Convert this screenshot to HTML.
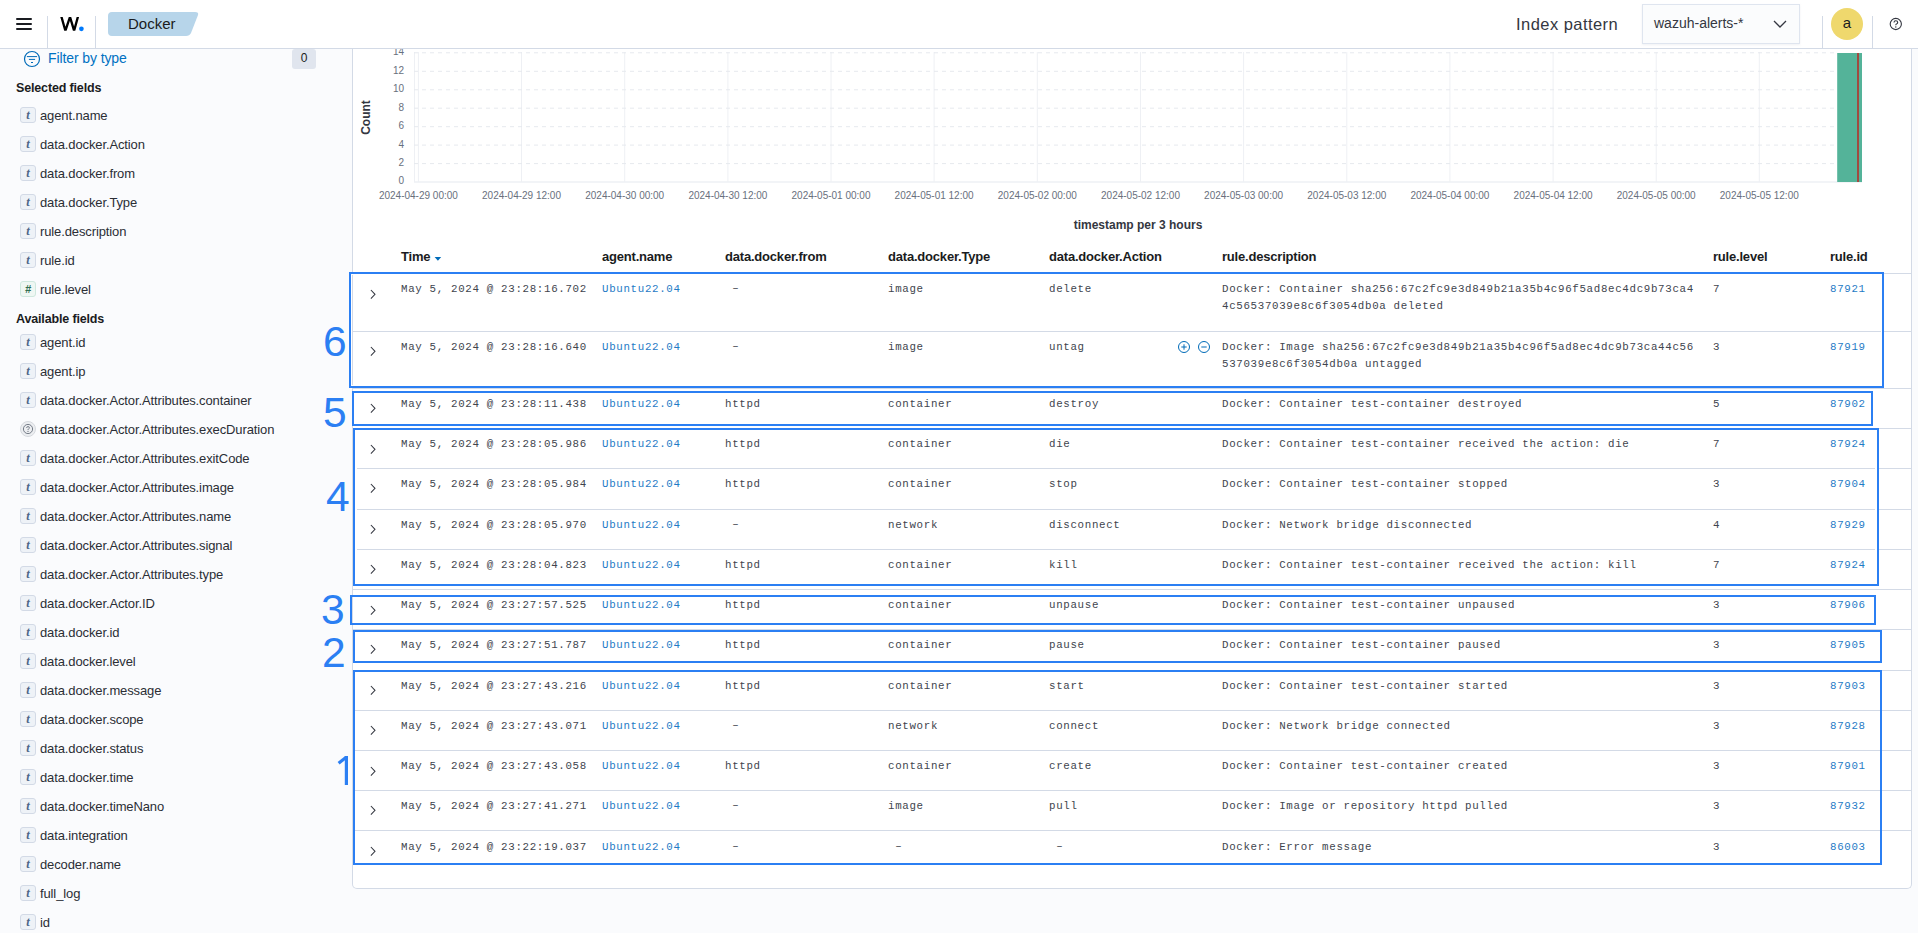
<!DOCTYPE html>
<html><head><meta charset="utf-8"><title>Docker - Wazuh</title>
<style>
*{box-sizing:border-box;margin:0;padding:0}
html,body{width:1918px;height:933px;overflow:hidden;background:#fafbfd;font-family:"Liberation Sans", sans-serif;color:#343741}
.abs{position:absolute}
.hdr{position:absolute;left:0;top:0;width:1918px;height:49px;background:#fff;border-bottom:1px solid #d3dae6}
.sep{position:absolute;width:1px;background:#d3dae6}
.fld{position:absolute;left:20px;height:16px;white-space:nowrap}
.fico{position:absolute;left:0;top:0;width:16px;height:16px;border:1px solid #d3dae6;background:#eef2f7;border-radius:3px;font-family:"Liberation Serif", serif;font-style:italic;font-weight:700;font-size:12.5px;line-height:14px;text-align:center;color:#4d6688}
.fname{position:absolute;left:20px;top:0px;font-size:13px;letter-spacing:-0.12px;line-height:18px;color:#2b2e35}
.sect{position:absolute;left:16px;font-size:12.5px;font-weight:700;letter-spacing:-0.15px;color:#1a1c21;white-space:nowrap}
.panel{position:absolute;left:352px;top:49px;width:1560px;height:840px;background:#fff;border:1px solid #d3dae6;border-top:none;border-radius:0 0 5px 5px}
.th{position:absolute;top:248px;font-size:13px;font-weight:700;color:#1a1c21;white-space:nowrap;letter-spacing:-0.2px;line-height:18px}
.row{position:absolute;left:353px;width:1558px;border-bottom:1px solid #d3dae6}
.cell{position:absolute;font-family:"Liberation Mono", monospace;font-size:10.8px;letter-spacing:0.67px;line-height:16.7px;color:#41454e;white-space:pre}
.lnk{color:#1f7bc6}
.chev{position:absolute;left:370px;width:7px;height:11px}
.box{position:absolute;border:2px solid #2b7ff3}
.num{position:absolute;font-size:42.5px;line-height:44px;color:#2b7ff3;font-family:"Liberation Sans", sans-serif}
</style></head><body>

<div class="hdr"></div>
<div class="abs" style="left:16px;top:18px;width:16px;height:2px;background:#1a1c21;border-radius:1px"></div>
<div class="abs" style="left:16px;top:23px;width:16px;height:2px;background:#1a1c21;border-radius:1px"></div>
<div class="abs" style="left:16px;top:28px;width:16px;height:2px;background:#1a1c21;border-radius:1px"></div>
<div class="sep" style="left:47px;top:16px;height:32px"></div>
<svg class="abs" style="left:56px;top:14px" width="32" height="20"><defs><clipPath id="wc"><rect x="0" y="3" width="24" height="13.8"/></clipPath></defs><polyline clip-path="url(#wc)" points="4.93,1 9.4,16.7 14,3 18.1,16.7 22.4,1" fill="none" stroke="#000" stroke-width="2.35" stroke-linejoin="miter" stroke-miterlimit="10"/><circle cx="25.4" cy="14.8" r="2.35" fill="#0079fb"/></svg>
<div class="sep" style="left:95px;top:16px;height:32px"></div>
<svg class="abs" style="left:0;top:0" width="220" height="48"><path d="M112 12 H195 Q199 12 198 15 L191 33 Q189.5 36 186 36 H112 Q108 36 108 32 V16 Q108 12 112 12 Z" fill="#b7d5ea"/></svg>
<div class="abs" style="left:128px;top:15px;font-size:15px;line-height:18px;color:#1a1c21">Docker</div>
<div class="abs" style="left:1516px;top:12.5px;font-size:16.5px;letter-spacing:0.45px;line-height:22px;color:#343741;white-space:nowrap">Index pattern</div>
<div class="abs" style="left:1642px;top:4px;width:158px;height:40px;background:#fbfcfd;border:1px solid #dfe5ef;box-shadow:0 1px 2px rgba(152,162,179,0.15)"></div>
<div class="abs" style="left:1654px;top:15px;font-size:14px;line-height:17px;color:#343741;white-space:nowrap">wazuh-alerts-*</div>
<svg class="abs" style="left:1772px;top:18px" width="16" height="12"><path d="M2 3 L8 9 L14 3" fill="none" stroke="#343741" stroke-width="1.3"/></svg>
<div class="sep" style="left:1822px;top:16px;height:32px"></div>
<div class="abs" style="left:1831px;top:8px;width:32px;height:32px;border-radius:50%;background:#efd86d;text-align:center;font-size:15px;line-height:29px;color:#1a1c21">a</div>
<div class="sep" style="left:1872px;top:16px;height:32px"></div>
<svg class="abs" style="left:1888px;top:16px" width="16" height="16"><circle cx="7.8" cy="8" r="5.6" fill="none" stroke="#343741" stroke-width="1.1"/><path d="M6 6.6 Q6 4.8 7.8 4.8 Q9.7 4.8 9.7 6.5 Q9.7 7.6 8.4 8.1 Q7.8 8.4 7.8 9.3" fill="none" stroke="#343741" stroke-width="1.1"/><circle cx="7.8" cy="11" r="0.7" fill="#343741"/></svg>
<svg class="abs" style="left:23px;top:50px" width="18" height="18"><circle cx="9" cy="9" r="7.5" fill="none" stroke="#006bb8" stroke-width="1.2"/><path d="M3.9 6.6 H14.1 M5.9 9.4 H12.1 M8 12.5 H10" stroke="#006bb8" stroke-width="1"/></svg>
<div class="abs" style="left:48px;top:49px;font-size:14px;letter-spacing:-0.1px;line-height:18px;color:#0071c2;white-space:nowrap">Filter by type</div>
<div class="abs" style="left:292px;top:49px;width:24px;height:20px;background:#e0e5ee;border-radius:3px;font-size:12px;line-height:19px;text-align:center;color:#1a1c21">0</div>
<div class="sect" style="top:80px;line-height:16px">Selected fields</div>
<div class="fld" style="top:107px"><div class="fico">t</div><div class="fname">agent.name</div></div>
<div class="fld" style="top:136px"><div class="fico">t</div><div class="fname">data.docker.Action</div></div>
<div class="fld" style="top:165px"><div class="fico">t</div><div class="fname">data.docker.from</div></div>
<div class="fld" style="top:194px"><div class="fico">t</div><div class="fname">data.docker.Type</div></div>
<div class="fld" style="top:223px"><div class="fico">t</div><div class="fname">rule.description</div></div>
<div class="fld" style="top:252px"><div class="fico">t</div><div class="fname">rule.id</div></div>
<div class="fld" style="top:281px"><div class="fico" style="border-color:#cfe8de;background:#eff7f3;color:#2f6e52;font-family:'Liberation Sans', sans-serif;font-style:italic;font-weight:700;font-size:11px">#</div><div class="fname">rule.level</div></div>
<div class="sect" style="top:311px;line-height:16px">Available fields</div>
<div class="fld" style="top:334px"><div class="fico">t</div><div class="fname">agent.id</div></div>
<div class="fld" style="top:363px"><div class="fico">t</div><div class="fname">agent.ip</div></div>
<div class="fld" style="top:392px"><div class="fico">t</div><div class="fname">data.docker.Actor.Attributes.container</div></div>
<div class="fld" style="top:421px"><svg class="abs" style="left:0;top:0" width="16" height="16"><circle cx="8" cy="8" r="7.5" fill="#eceef1" stroke="#d6d9de" stroke-width="1"/><circle cx="8" cy="8" r="4.6" fill="none" stroke="#69707d" stroke-width="0.9"/><path d="M6.6 6.9 Q6.6 5.6 8 5.6 Q9.4 5.6 9.4 6.8 Q9.4 7.6 8.5 8 Q8 8.3 8 9" fill="none" stroke="#69707d" stroke-width="0.9"/><circle cx="8" cy="10.4" r="0.55" fill="#69707d"/></svg><div class="fname">data.docker.Actor.Attributes.execDuration</div></div>
<div class="fld" style="top:450px"><div class="fico">t</div><div class="fname">data.docker.Actor.Attributes.exitCode</div></div>
<div class="fld" style="top:479px"><div class="fico">t</div><div class="fname">data.docker.Actor.Attributes.image</div></div>
<div class="fld" style="top:508px"><div class="fico">t</div><div class="fname">data.docker.Actor.Attributes.name</div></div>
<div class="fld" style="top:537px"><div class="fico">t</div><div class="fname">data.docker.Actor.Attributes.signal</div></div>
<div class="fld" style="top:566px"><div class="fico">t</div><div class="fname">data.docker.Actor.Attributes.type</div></div>
<div class="fld" style="top:595px"><div class="fico">t</div><div class="fname">data.docker.Actor.ID</div></div>
<div class="fld" style="top:624px"><div class="fico">t</div><div class="fname">data.docker.id</div></div>
<div class="fld" style="top:653px"><div class="fico">t</div><div class="fname">data.docker.level</div></div>
<div class="fld" style="top:682px"><div class="fico">t</div><div class="fname">data.docker.message</div></div>
<div class="fld" style="top:711px"><div class="fico">t</div><div class="fname">data.docker.scope</div></div>
<div class="fld" style="top:740px"><div class="fico">t</div><div class="fname">data.docker.status</div></div>
<div class="fld" style="top:769px"><div class="fico">t</div><div class="fname">data.docker.time</div></div>
<div class="fld" style="top:798px"><div class="fico">t</div><div class="fname">data.docker.timeNano</div></div>
<div class="fld" style="top:827px"><div class="fico">t</div><div class="fname">data.integration</div></div>
<div class="fld" style="top:856px"><div class="fico">t</div><div class="fname">decoder.name</div></div>
<div class="fld" style="top:885px"><div class="fico">t</div><div class="fname">full_log</div></div>
<div class="fld" style="top:914px"><div class="fico">t</div><div class="fname">id</div></div>
<div class="panel"></div>
<svg class="abs" style="left:0;top:49px" width="1918" height="191"><g transform="translate(0,-49)"><line x1="418.4" y1="52" x2="418.4" y2="182" stroke="#eef0f4" stroke-width="1"/><line x1="521.5" y1="52" x2="521.5" y2="182" stroke="#eef0f4" stroke-width="1"/><line x1="624.7" y1="52" x2="624.7" y2="182" stroke="#eef0f4" stroke-width="1"/><line x1="727.9" y1="52" x2="727.9" y2="182" stroke="#eef0f4" stroke-width="1"/><line x1="831.0" y1="52" x2="831.0" y2="182" stroke="#eef0f4" stroke-width="1"/><line x1="934.1" y1="52" x2="934.1" y2="182" stroke="#eef0f4" stroke-width="1"/><line x1="1037.3" y1="52" x2="1037.3" y2="182" stroke="#eef0f4" stroke-width="1"/><line x1="1140.5" y1="52" x2="1140.5" y2="182" stroke="#eef0f4" stroke-width="1"/><line x1="1243.6" y1="52" x2="1243.6" y2="182" stroke="#eef0f4" stroke-width="1"/><line x1="1346.8" y1="52" x2="1346.8" y2="182" stroke="#eef0f4" stroke-width="1"/><line x1="1449.9" y1="52" x2="1449.9" y2="182" stroke="#eef0f4" stroke-width="1"/><line x1="1553.1" y1="52" x2="1553.1" y2="182" stroke="#eef0f4" stroke-width="1"/><line x1="1656.2" y1="52" x2="1656.2" y2="182" stroke="#eef0f4" stroke-width="1"/><line x1="1759.3" y1="52" x2="1759.3" y2="182" stroke="#eef0f4" stroke-width="1"/><line x1="414.5" y1="52" x2="414.5" y2="182" stroke="#eef0f4" stroke-width="1"/><line x1="414" y1="163.6" x2="1835" y2="163.6" stroke="#e6e9ee" stroke-width="1" stroke-dasharray="4 4"/><line x1="414" y1="145.1" x2="1835" y2="145.1" stroke="#e6e9ee" stroke-width="1" stroke-dasharray="4 4"/><line x1="414" y1="126.7" x2="1835" y2="126.7" stroke="#e6e9ee" stroke-width="1" stroke-dasharray="4 4"/><line x1="414" y1="108.2" x2="1835" y2="108.2" stroke="#e6e9ee" stroke-width="1" stroke-dasharray="4 4"/><line x1="414" y1="89.8" x2="1835" y2="89.8" stroke="#e6e9ee" stroke-width="1" stroke-dasharray="4 4"/><line x1="414" y1="71.3" x2="1835" y2="71.3" stroke="#e6e9ee" stroke-width="1" stroke-dasharray="4 4"/><line x1="414" y1="52.8" x2="1835" y2="52.8" stroke="#e6e9ee" stroke-width="1" stroke-dasharray="4 4"/><line x1="414" y1="182" x2="1862" y2="182" stroke="#eef0f4" stroke-width="1.5"/><text x="404" y="184.4" text-anchor="end" font-family="Liberation Sans" font-size="10" fill="#69707d">0</text><text x="404" y="166.0" text-anchor="end" font-family="Liberation Sans" font-size="10" fill="#69707d">2</text><text x="404" y="147.5" text-anchor="end" font-family="Liberation Sans" font-size="10" fill="#69707d">4</text><text x="404" y="129.1" text-anchor="end" font-family="Liberation Sans" font-size="10" fill="#69707d">6</text><text x="404" y="110.6" text-anchor="end" font-family="Liberation Sans" font-size="10" fill="#69707d">8</text><text x="404" y="92.2" text-anchor="end" font-family="Liberation Sans" font-size="10" fill="#69707d">10</text><text x="404" y="73.7" text-anchor="end" font-family="Liberation Sans" font-size="10" fill="#69707d">12</text><text x="404" y="55.2" text-anchor="end" font-family="Liberation Sans" font-size="10" fill="#69707d">14</text><text x="418.4" y="198.6" text-anchor="middle" font-family="Liberation Sans" font-size="10" fill="#69707d">2024-04-29 00:00</text><text x="521.5" y="198.6" text-anchor="middle" font-family="Liberation Sans" font-size="10" fill="#69707d">2024-04-29 12:00</text><text x="624.7" y="198.6" text-anchor="middle" font-family="Liberation Sans" font-size="10" fill="#69707d">2024-04-30 00:00</text><text x="727.9" y="198.6" text-anchor="middle" font-family="Liberation Sans" font-size="10" fill="#69707d">2024-04-30 12:00</text><text x="831.0" y="198.6" text-anchor="middle" font-family="Liberation Sans" font-size="10" fill="#69707d">2024-05-01 00:00</text><text x="934.1" y="198.6" text-anchor="middle" font-family="Liberation Sans" font-size="10" fill="#69707d">2024-05-01 12:00</text><text x="1037.3" y="198.6" text-anchor="middle" font-family="Liberation Sans" font-size="10" fill="#69707d">2024-05-02 00:00</text><text x="1140.5" y="198.6" text-anchor="middle" font-family="Liberation Sans" font-size="10" fill="#69707d">2024-05-02 12:00</text><text x="1243.6" y="198.6" text-anchor="middle" font-family="Liberation Sans" font-size="10" fill="#69707d">2024-05-03 00:00</text><text x="1346.8" y="198.6" text-anchor="middle" font-family="Liberation Sans" font-size="10" fill="#69707d">2024-05-03 12:00</text><text x="1449.9" y="198.6" text-anchor="middle" font-family="Liberation Sans" font-size="10" fill="#69707d">2024-05-04 00:00</text><text x="1553.1" y="198.6" text-anchor="middle" font-family="Liberation Sans" font-size="10" fill="#69707d">2024-05-04 12:00</text><text x="1656.2" y="198.6" text-anchor="middle" font-family="Liberation Sans" font-size="10" fill="#69707d">2024-05-05 00:00</text><text x="1759.3" y="198.6" text-anchor="middle" font-family="Liberation Sans" font-size="10" fill="#69707d">2024-05-05 12:00</text><rect x="1837.2" y="53" width="24.8" height="129" fill="#54b399"/><rect x="1857" y="53" width="2" height="129" fill="#a04a3f"/><text transform="translate(370,117.5) rotate(-90)" text-anchor="middle" font-family="Liberation Sans" font-weight="700" font-size="12" fill="#343741">Count</text><text x="1138" y="229.2" text-anchor="middle" font-family="Liberation Sans" font-weight="700" font-size="12" fill="#343741">timestamp per 3 hours</text></g></svg>
<div class="th" style="left:401px">Time</div>
<svg class="abs" style="left:433px;top:256px" width="10" height="6"><path d="M1.6 1 H8.2 L4.9 4.7 Z" fill="#006bb8"/></svg>
<div class="th" style="left:602px">agent.name</div>
<div class="th" style="left:725px">data.docker.from</div>
<div class="th" style="left:888px">data.docker.Type</div>
<div class="th" style="left:1049px">data.docker.Action</div>
<div class="th" style="left:1222px">rule.description</div>
<div class="th" style="left:1713px">rule.level</div>
<div class="th" style="left:1830px">rule.id</div>
<div class="abs" style="left:357px;top:273px;width:1554px;height:1px;background:#d3dae6"></div>
<div class="abs" style="left:353px;top:331px;width:1558px;height:1px;background:#d3dae6"></div>
<div class="abs" style="left:353px;top:388px;width:1558px;height:1px;background:#d3dae6"></div>
<div class="abs" style="left:353px;top:428px;width:1558px;height:1px;background:#d3dae6"></div>
<div class="abs" style="left:353px;top:468px;width:1558px;height:1px;background:#d3dae6"></div>
<div class="abs" style="left:353px;top:509px;width:1558px;height:1px;background:#d3dae6"></div>
<div class="abs" style="left:353px;top:549px;width:1558px;height:1px;background:#d3dae6"></div>
<div class="abs" style="left:353px;top:589px;width:1558px;height:1px;background:#d3dae6"></div>
<div class="abs" style="left:353px;top:629px;width:1558px;height:1px;background:#d3dae6"></div>
<div class="abs" style="left:353px;top:670px;width:1558px;height:1px;background:#d3dae6"></div>
<div class="abs" style="left:353px;top:710px;width:1558px;height:1px;background:#d3dae6"></div>
<div class="abs" style="left:353px;top:750px;width:1558px;height:1px;background:#d3dae6"></div>
<div class="abs" style="left:353px;top:790px;width:1558px;height:1px;background:#d3dae6"></div>
<div class="abs" style="left:353px;top:830px;width:1558px;height:1px;background:#d3dae6"></div>
<svg class="chev" style="top:288.6px" width="7" height="11"><path d="M0.9 1 L5 5.3 L0.9 9.6" fill="none" stroke="#343741" stroke-width="1.05"/></svg>
<div class="cell" style="left:401px;top:281.4px">May 5, 2024 @ 23:28:16.702</div>
<div class="cell lnk" style="left:602px;top:281.4px">Ubuntu22.04</div>
<div class="cell" style="left:725px;top:281.4px"> <span style="position:relative;top:-1px">–</span></div>
<div class="cell" style="left:888px;top:281.4px">image</div>
<div class="cell" style="left:1049px;top:281.4px">delete</div>
<div class="cell" style="left:1222px;top:281.4px">Docker: Container sha256:67c2fc9e3d849b21a35b4c96f5ad8ec4dc9b73ca4
4c56537039e8c6f3054db0a deleted</div>
<div class="cell" style="left:1713px;top:281.4px">7</div>
<div class="cell lnk" style="left:1830px;top:281.4px">87921</div>
<svg class="chev" style="top:346.0px" width="7" height="11"><path d="M0.9 1 L5 5.3 L0.9 9.6" fill="none" stroke="#343741" stroke-width="1.05"/></svg>
<div class="cell" style="left:401px;top:338.8px">May 5, 2024 @ 23:28:16.640</div>
<div class="cell lnk" style="left:602px;top:338.8px">Ubuntu22.04</div>
<div class="cell" style="left:725px;top:338.8px"> <span style="position:relative;top:-1px">–</span></div>
<div class="cell" style="left:888px;top:338.8px">image</div>
<div class="cell" style="left:1049px;top:338.8px">untag</div>
<div class="cell" style="left:1222px;top:338.8px">Docker: Image sha256:67c2fc9e3d849b21a35b4c96f5ad8ec4dc9b73ca44c56
537039e8c6f3054db0a untagged</div>
<div class="cell" style="left:1713px;top:338.8px">3</div>
<div class="cell lnk" style="left:1830px;top:338.8px">87919</div>
<svg class="chev" style="top:403.4px" width="7" height="11"><path d="M0.9 1 L5 5.3 L0.9 9.6" fill="none" stroke="#343741" stroke-width="1.05"/></svg>
<div class="cell" style="left:401px;top:396.2px">May 5, 2024 @ 23:28:11.438</div>
<div class="cell lnk" style="left:602px;top:396.2px">Ubuntu22.04</div>
<div class="cell" style="left:725px;top:396.2px">httpd</div>
<div class="cell" style="left:888px;top:396.2px">container</div>
<div class="cell" style="left:1049px;top:396.2px">destroy</div>
<div class="cell" style="left:1222px;top:396.2px">Docker: Container test-container destroyed</div>
<div class="cell" style="left:1713px;top:396.2px">5</div>
<div class="cell lnk" style="left:1830px;top:396.2px">87902</div>
<svg class="chev" style="top:443.7px" width="7" height="11"><path d="M0.9 1 L5 5.3 L0.9 9.6" fill="none" stroke="#343741" stroke-width="1.05"/></svg>
<div class="cell" style="left:401px;top:436.4px">May 5, 2024 @ 23:28:05.986</div>
<div class="cell lnk" style="left:602px;top:436.4px">Ubuntu22.04</div>
<div class="cell" style="left:725px;top:436.4px">httpd</div>
<div class="cell" style="left:888px;top:436.4px">container</div>
<div class="cell" style="left:1049px;top:436.4px">die</div>
<div class="cell" style="left:1222px;top:436.4px">Docker: Container test-container received the action: die</div>
<div class="cell" style="left:1713px;top:436.4px">7</div>
<div class="cell lnk" style="left:1830px;top:436.4px">87924</div>
<svg class="chev" style="top:482.9px" width="7" height="11"><path d="M0.9 1 L5 5.3 L0.9 9.6" fill="none" stroke="#343741" stroke-width="1.05"/></svg>
<div class="cell" style="left:401px;top:475.7px">May 5, 2024 @ 23:28:05.984</div>
<div class="cell lnk" style="left:602px;top:475.7px">Ubuntu22.04</div>
<div class="cell" style="left:725px;top:475.7px">httpd</div>
<div class="cell" style="left:888px;top:475.7px">container</div>
<div class="cell" style="left:1049px;top:475.7px">stop</div>
<div class="cell" style="left:1222px;top:475.7px">Docker: Container test-container stopped</div>
<div class="cell" style="left:1713px;top:475.7px">3</div>
<div class="cell lnk" style="left:1830px;top:475.7px">87904</div>
<svg class="chev" style="top:524.1px" width="7" height="11"><path d="M0.9 1 L5 5.3 L0.9 9.6" fill="none" stroke="#343741" stroke-width="1.05"/></svg>
<div class="cell" style="left:401px;top:516.9px">May 5, 2024 @ 23:28:05.970</div>
<div class="cell lnk" style="left:602px;top:516.9px">Ubuntu22.04</div>
<div class="cell" style="left:725px;top:516.9px"> <span style="position:relative;top:-1px">–</span></div>
<div class="cell" style="left:888px;top:516.9px">network</div>
<div class="cell" style="left:1049px;top:516.9px">disconnect</div>
<div class="cell" style="left:1222px;top:516.9px">Docker: Network bridge disconnected</div>
<div class="cell" style="left:1713px;top:516.9px">4</div>
<div class="cell lnk" style="left:1830px;top:516.9px">87929</div>
<svg class="chev" style="top:564.4px" width="7" height="11"><path d="M0.9 1 L5 5.3 L0.9 9.6" fill="none" stroke="#343741" stroke-width="1.05"/></svg>
<div class="cell" style="left:401px;top:557.2px">May 5, 2024 @ 23:28:04.823</div>
<div class="cell lnk" style="left:602px;top:557.2px">Ubuntu22.04</div>
<div class="cell" style="left:725px;top:557.2px">httpd</div>
<div class="cell" style="left:888px;top:557.2px">container</div>
<div class="cell" style="left:1049px;top:557.2px">kill</div>
<div class="cell" style="left:1222px;top:557.2px">Docker: Container test-container received the action: kill</div>
<div class="cell" style="left:1713px;top:557.2px">7</div>
<div class="cell lnk" style="left:1830px;top:557.2px">87924</div>
<svg class="chev" style="top:604.6px" width="7" height="11"><path d="M0.9 1 L5 5.3 L0.9 9.6" fill="none" stroke="#343741" stroke-width="1.05"/></svg>
<div class="cell" style="left:401px;top:597.4px">May 5, 2024 @ 23:27:57.525</div>
<div class="cell lnk" style="left:602px;top:597.4px">Ubuntu22.04</div>
<div class="cell" style="left:725px;top:597.4px">httpd</div>
<div class="cell" style="left:888px;top:597.4px">container</div>
<div class="cell" style="left:1049px;top:597.4px">unpause</div>
<div class="cell" style="left:1222px;top:597.4px">Docker: Container test-container unpaused</div>
<div class="cell" style="left:1713px;top:597.4px">3</div>
<div class="cell lnk" style="left:1830px;top:597.4px">87906</div>
<svg class="chev" style="top:643.9px" width="7" height="11"><path d="M0.9 1 L5 5.3 L0.9 9.6" fill="none" stroke="#343741" stroke-width="1.05"/></svg>
<div class="cell" style="left:401px;top:636.7px">May 5, 2024 @ 23:27:51.787</div>
<div class="cell lnk" style="left:602px;top:636.7px">Ubuntu22.04</div>
<div class="cell" style="left:725px;top:636.7px">httpd</div>
<div class="cell" style="left:888px;top:636.7px">container</div>
<div class="cell" style="left:1049px;top:636.7px">pause</div>
<div class="cell" style="left:1222px;top:636.7px">Docker: Container test-container paused</div>
<div class="cell" style="left:1713px;top:636.7px">3</div>
<div class="cell lnk" style="left:1830px;top:636.7px">87905</div>
<svg class="chev" style="top:685.1px" width="7" height="11"><path d="M0.9 1 L5 5.3 L0.9 9.6" fill="none" stroke="#343741" stroke-width="1.05"/></svg>
<div class="cell" style="left:401px;top:677.9px">May 5, 2024 @ 23:27:43.216</div>
<div class="cell lnk" style="left:602px;top:677.9px">Ubuntu22.04</div>
<div class="cell" style="left:725px;top:677.9px">httpd</div>
<div class="cell" style="left:888px;top:677.9px">container</div>
<div class="cell" style="left:1049px;top:677.9px">start</div>
<div class="cell" style="left:1222px;top:677.9px">Docker: Container test-container started</div>
<div class="cell" style="left:1713px;top:677.9px">3</div>
<div class="cell lnk" style="left:1830px;top:677.9px">87903</div>
<svg class="chev" style="top:725.4px" width="7" height="11"><path d="M0.9 1 L5 5.3 L0.9 9.6" fill="none" stroke="#343741" stroke-width="1.05"/></svg>
<div class="cell" style="left:401px;top:718.2px">May 5, 2024 @ 23:27:43.071</div>
<div class="cell lnk" style="left:602px;top:718.2px">Ubuntu22.04</div>
<div class="cell" style="left:725px;top:718.2px"> <span style="position:relative;top:-1px">–</span></div>
<div class="cell" style="left:888px;top:718.2px">network</div>
<div class="cell" style="left:1049px;top:718.2px">connect</div>
<div class="cell" style="left:1222px;top:718.2px">Docker: Network bridge connected</div>
<div class="cell" style="left:1713px;top:718.2px">3</div>
<div class="cell lnk" style="left:1830px;top:718.2px">87928</div>
<svg class="chev" style="top:765.6px" width="7" height="11"><path d="M0.9 1 L5 5.3 L0.9 9.6" fill="none" stroke="#343741" stroke-width="1.05"/></svg>
<div class="cell" style="left:401px;top:758.4px">May 5, 2024 @ 23:27:43.058</div>
<div class="cell lnk" style="left:602px;top:758.4px">Ubuntu22.04</div>
<div class="cell" style="left:725px;top:758.4px">httpd</div>
<div class="cell" style="left:888px;top:758.4px">container</div>
<div class="cell" style="left:1049px;top:758.4px">create</div>
<div class="cell" style="left:1222px;top:758.4px">Docker: Container test-container created</div>
<div class="cell" style="left:1713px;top:758.4px">3</div>
<div class="cell lnk" style="left:1830px;top:758.4px">87901</div>
<svg class="chev" style="top:804.9px" width="7" height="11"><path d="M0.9 1 L5 5.3 L0.9 9.6" fill="none" stroke="#343741" stroke-width="1.05"/></svg>
<div class="cell" style="left:401px;top:797.7px">May 5, 2024 @ 23:27:41.271</div>
<div class="cell lnk" style="left:602px;top:797.7px">Ubuntu22.04</div>
<div class="cell" style="left:725px;top:797.7px"> <span style="position:relative;top:-1px">–</span></div>
<div class="cell" style="left:888px;top:797.7px">image</div>
<div class="cell" style="left:1049px;top:797.7px">pull</div>
<div class="cell" style="left:1222px;top:797.7px">Docker: Image or repository httpd pulled</div>
<div class="cell" style="left:1713px;top:797.7px">3</div>
<div class="cell lnk" style="left:1830px;top:797.7px">87932</div>
<svg class="chev" style="top:846.1px" width="7" height="11"><path d="M0.9 1 L5 5.3 L0.9 9.6" fill="none" stroke="#343741" stroke-width="1.05"/></svg>
<div class="cell" style="left:401px;top:838.9px">May 5, 2024 @ 23:22:19.037</div>
<div class="cell lnk" style="left:602px;top:838.9px">Ubuntu22.04</div>
<div class="cell" style="left:725px;top:838.9px"> <span style="position:relative;top:-1px">–</span></div>
<div class="cell" style="left:888px;top:838.9px"> <span style="position:relative;top:-1px">–</span></div>
<div class="cell" style="left:1049px;top:838.9px"> <span style="position:relative;top:-1px">–</span></div>
<div class="cell" style="left:1222px;top:838.9px">Docker: Error message</div>
<div class="cell" style="left:1713px;top:838.9px">3</div>
<div class="cell lnk" style="left:1830px;top:838.9px">86003</div>
<svg class="abs" style="left:1177px;top:340px" width="34" height="14"><circle cx="7" cy="7" r="5.5" fill="none" stroke="#006bb8" stroke-width="1"/><path d="M4.3 7 H9.7 M7 4.3 V9.7" stroke="#006bb8" stroke-width="1"/><circle cx="27" cy="7" r="5.5" fill="none" stroke="#006bb8" stroke-width="1"/><path d="M24.3 7 H29.7" stroke="#006bb8" stroke-width="1"/></svg>
<div class="box" style="left:349px;top:272px;width:1535px;height:116px;box-shadow:inset 0 0 0 1px #fff"></div>
<div class="box" style="left:352px;top:391px;width:1521px;height:35px"></div>
<div class="box" style="left:353px;top:428px;width:1526px;height:158px;box-shadow:inset 0 0 0 2px #fff"></div>
<div class="box" style="left:350px;top:595px;width:1526px;height:30px"></div>
<div class="box" style="left:353px;top:630px;width:1529px;height:33px"></div>
<div class="box" style="left:353px;top:670px;width:1529px;height:195px"></div>
<div class="num" style="left:323px;top:320px">6</div>
<div class="num" style="left:323px;top:391px">5</div>
<div class="num" style="left:326px;top:475px">4</div>
<div class="num" style="left:321px;top:588px">3</div>
<div class="num" style="left:322px;top:631px">2</div>
<svg class="abs" style="left:330px;top:750px" width="22" height="40"><rect x="14.8" y="6" width="3.2" height="29" fill="#2b7ff3"/><path d="M8.6 13.2 L16.2 7.2" stroke="#2b7ff3" stroke-width="3.2"/></svg>
</body></html>
